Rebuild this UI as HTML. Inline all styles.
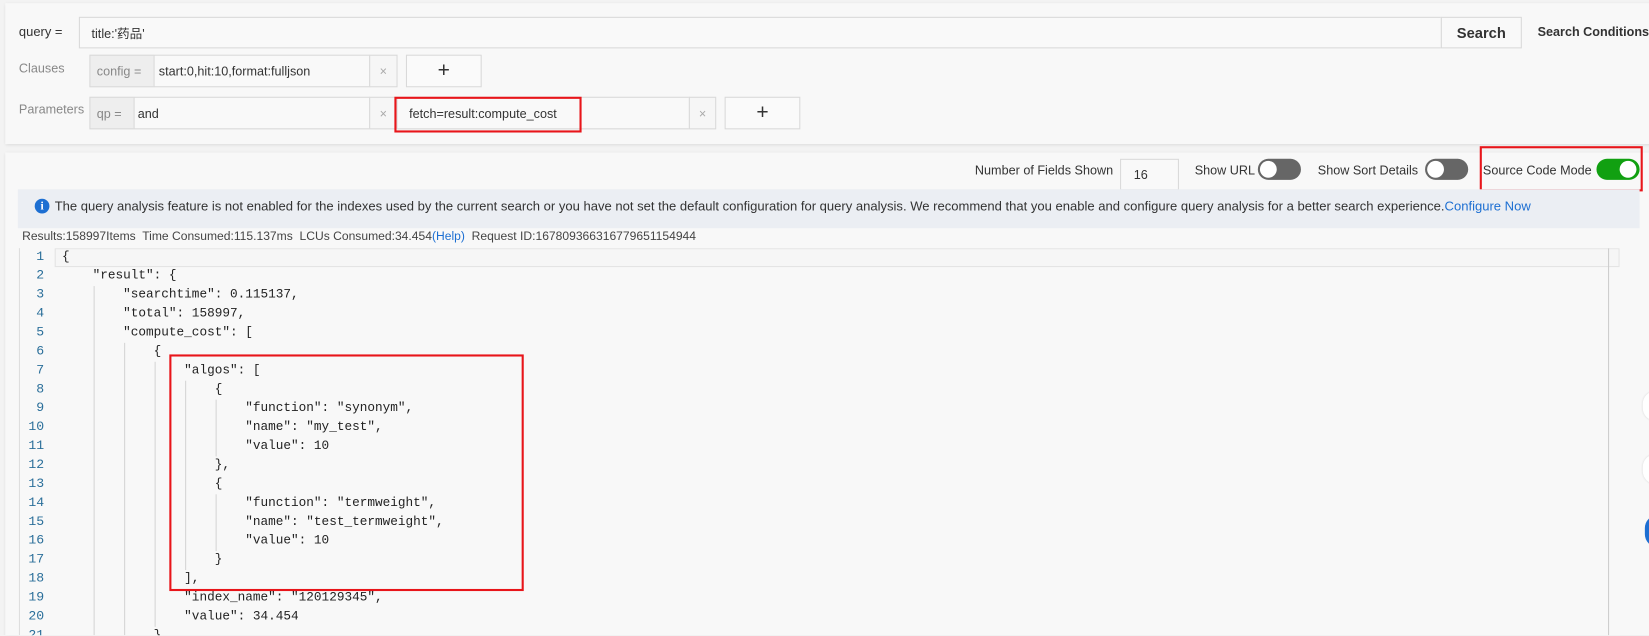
<!DOCTYPE html>
<html><head><meta charset="utf-8"><style>
*{box-sizing:border-box;margin:0;padding:0}
html,body{overflow:hidden}
body{width:1649px;height:636px;overflow:hidden;background:#f3f3f3;font-family:"Liberation Sans","Noto Sans CJK SC",sans-serif;font-size:12px;color:#333;position:relative}
#w{position:absolute;left:0;top:0;width:1568px;height:604px;transform:scale(1.0517);transform-origin:0 0;overflow:hidden}
.abs{position:absolute}
.panel{position:absolute;background:#f8f8f8;box-shadow:0 1px 3px rgba(0,0,0,.12)}
.box{position:absolute;border:1px solid #d9d9d9;background:#f9f9f9;display:flex;align-items:center;padding-left:6px;font-size:12px}
.lab{background:#eeeeee;color:#888}
.x{color:#aaa;justify-content:center;padding:0;background:#f6f6f6}
.plus{justify-content:center;padding:0;font-size:20px;color:#333;background:#fafafa}
.red{position:absolute;border:2px solid #e8151a}
.tog{position:absolute;width:41px;height:20px;border-radius:10px;background:#666}
.tog::after{content:"";position:absolute;top:2px;width:16px;height:16px;border-radius:50%;background:#fff}
.off::after{left:2px}.on{background:#11a011}.on::after{right:3px}
.code{position:absolute;left:18px;top:236px;width:1522px;height:368px;background:#f8f8f8;border-left:1px solid #ddd;font-family:"Liberation Mono",monospace;font-size:12.5px;overflow:hidden}
.ln{position:absolute;left:0;width:24px;text-align:right;color:#2b6f9a;font-family:"Liberation Mono",monospace}
.cl{position:absolute;white-space:pre;color:#222}
.g{position:absolute;width:1px;background:#d5d5d5}
</style></head><body><div id="w">
<div class="panel" style="left:5px;top:3px;width:1650px;height:134px"></div>
<div class="abs" style="left:18px;top:23px;font-size:12.3px">query =</div>
<div class="box" style="left:75px;top:16px;width:1296px;height:30px;padding-left:11px">title:'药品'</div>
<div class="box" style="left:1370px;top:16px;width:77px;height:30px;justify-content:center;padding:0;font-weight:bold;font-size:14px">Search</div>
<div class="abs" style="left:1462px;top:23px;font-weight:bold;font-size:12px">Search Conditions</div>
<div class="abs" style="left:18px;top:58px;color:#888">Clauses</div>
<div class="box lab" style="left:85px;top:52px;width:62px;height:31px">config =</div>
<div class="box" style="left:146px;top:52px;width:206px;height:31px;padding-left:4px">start:0,hit:10,format:fulljson</div>
<div class="box x" style="left:351px;top:52px;width:27px;height:31px">×</div>
<div class="box plus" style="left:386px;top:52px;width:72px;height:31px">+</div>
<div class="abs" style="left:18px;top:97px;color:#888">Parameters</div>
<div class="box lab" style="left:85px;top:92px;width:43px;height:31px">qp =</div>
<div class="box" style="left:127px;top:92px;width:225px;height:31px;padding-left:3px">and</div>
<div class="box x" style="left:351px;top:92px;width:27px;height:31px">×</div>
<div class="box" style="left:377px;top:92px;width:279px;height:31px;padding-left:11px">fetch=result:compute_cost</div>
<div class="box x" style="left:655px;top:92px;width:26px;height:31px">×</div>
<div class="box plus" style="left:689px;top:92px;width:72px;height:31px">+</div>
<div class="red" style="left:375px;top:92px;width:178px;height:34px"></div>

<div class="panel" style="left:5px;top:145px;width:1650px;height:460px"></div>
<div class="abs" style="left:927px;top:155px">Number of Fields Shown</div>
<div class="box" style="left:1065px;top:151px;width:56px;height:30px;padding-left:12px">16</div>
<div class="abs" style="left:1136px;top:155px">Show URL</div>
<div class="tog off" style="left:1196px;top:151px"></div>
<div class="abs" style="left:1253px;top:155px">Show Sort Details</div>
<div class="tog off" style="left:1355px;top:151px"></div>
<div class="abs" style="left:1410px;top:155px">Source Code Mode</div>
<div class="tog on" style="left:1518px;top:151px"></div>
<div class="red" style="left:1407px;top:139px;width:155px;height:43px"></div>

<div class="abs" style="left:17px;top:180px;width:1542px;height:37px;background:#ebeef3"></div>
<div class="abs" style="left:33px;top:189px;width:14px;height:14px;border-radius:50%;background:#1d6fd2;color:#fff;font-size:11px;font-weight:bold;text-align:center;line-height:14px;font-family:'Liberation Serif',serif">i</div>
<div class="abs" style="left:52px;top:189px;font-size:12.4px;color:#333;white-space:nowrap">The query analysis feature is not enabled for the indexes used by the current search or you have not set the default configuration for query analysis. We recommend that you enable and configure query analysis for a better search experience.<span style="color:#1d6fd2">Configure Now</span></div>
<div class="abs" style="left:21px;top:219px;font-size:11.5px;color:#444">Results:158997Items&nbsp; Time Consumed:115.137ms&nbsp; LCUs Consumed:34.454<span style="color:#1d6fd2">(Help)</span>&nbsp; Request ID:167809366316779651154944</div>

<div class="code">
<div class="abs" style="left:33px;top:0;width:1488px;height:18px;border:1px solid #e3e3e3;background:#f6f6f6"></div>
<div class="abs" style="left:1510px;top:0;width:1px;height:400px;background:#ccc"></div>
<div class="g" style="left:70px;top:36px;height:340px"></div>
<div class="g" style="left:99px;top:90px;height:290px"></div>
<div class="g" style="left:128px;top:108px;height:252px"></div>
<div class="g" style="left:157px;top:126px;height:180px"></div>
<div class="g" style="left:186px;top:144px;height:54px"></div>
<div class="g" style="left:186px;top:234px;height:54px"></div>
</div>
<div id="lines"></div>
<div class="red" style="left:161px;top:337px;width:337px;height:225px"></div>
<div class="abs" style="left:1562px;top:372px;width:12px;height:28px;border-radius:14px 0 0 14px;background:#fff;box-shadow:0 0 2px rgba(0,0,0,.15)"></div>
<div class="abs" style="left:1562px;top:432px;width:12px;height:28px;border-radius:14px 0 0 14px;background:#fff;box-shadow:0 0 2px rgba(0,0,0,.15)"></div>
<div class="abs" style="left:1564px;top:490px;width:12px;height:30px;border-radius:15px 0 0 15px;background:#1d6fd2"></div>
</div>
<script>
var L=['{','    "result": {','        "searchtime": 0.115137,','        "total": 158997,','        "compute_cost": [','            {','                "algos": [','                    {','                        "function": "synonym",','                        "name": "my_test",','                        "value": 10','                    },','                    {','                        "function": "termweight",','                        "name": "test_termweight",','                        "value": 10','                    }','                ],','                "index_name": "120129345",','                "value": 34.454','            }'];
var h='';
for(var i=0;i<L.length;i++){var t=236+i*18;
h+='<div class="ln" style="left:18px;top:'+(t+1)+'px;font-size:12.5px">'+(i+1)+'</div>';
h+='<div class="cl" style="left:59px;top:'+(t+1)+'px;font-family:\'Liberation Mono\',monospace;font-size:12.1px">'+L[i].replace(/ /g,'&nbsp;')+'</div>';}
document.getElementById('lines').innerHTML=h;
</script>
</body></html>
